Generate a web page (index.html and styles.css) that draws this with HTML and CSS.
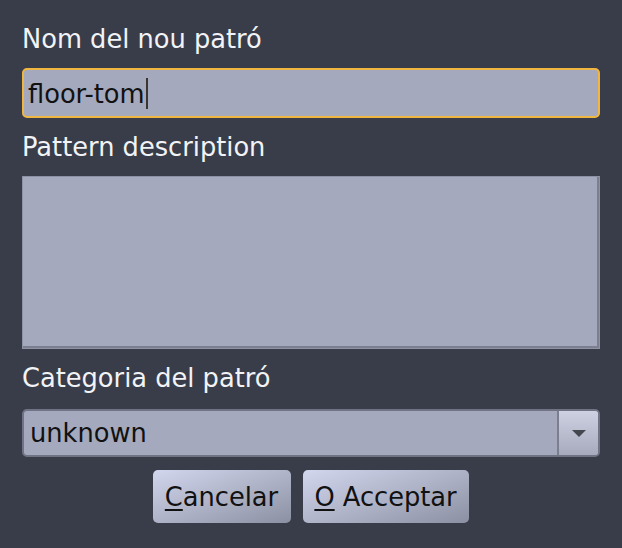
FILE: index.html
```html
<!DOCTYPE html>
<html>
<head>
<meta charset="utf-8">
<link rel="stylesheet" href="styles.css">
</head>
<body>
<div class="dialog">
  <div class="label">Nom del nou patró</div>
  <div class="entry"><span class="entry-text">floor-tom</span><span class="caret"></span></div>
  <div class="label">Pattern description</div>
  <div class="textarea"></div>
  <div class="label">Categoria del patró</div>
  <div class="combo">
    <span class="combo-text">unknown</span>
    <span class="combo-btn"><span class="arrow"></span></span>
  </div>
  <div class="buttons">
    <div class="btn btn-cancel"><span><span class="mn">C</span>ancelar</span></div>
    <div class="btn btn-ok"><span><span class="mn">O</span> Acceptar</span></div>
  </div>
</div>
</body>
</html>
```

FILE: styles.css
```css
html, body {
  margin: 0;
  padding: 0;
  background: #393d49;
}
body {
  width: 622px;
  height: 548px;
  overflow: hidden;
  font-family: "DejaVu Sans", sans-serif;
  font-size: 25.7px;
  line-height: 30px;
}
.dialog {
  display: flex;
  flex-direction: column;
  padding: 24px 22px 0 22px;
}
.label {
  color: #f2f3f6;
  padding-left: 0;
}
.entry {
  margin: 14px 0;
  height: 50px;
  box-sizing: border-box;
  border: 2px solid #f0b642;
  border-radius: 5px;
  background: #a4a9bd;
  display: flex;
  align-items: center;
  padding-left: 4px;
  color: #111;
}
.entry-text {
  position: relative;
  top: 1px;
}
.caret {
  display: inline-block;
  width: 2px;
  height: 31px;
  background: #3a3530;
  margin-left: 1px;
}
.textarea {
  margin: 14px 0;
  height: 173px;
  box-sizing: border-box;
  background: #a4a9bd;
  border: 1px solid #8d92a5;
  box-shadow: inset -2px -2px 0 #7b7f90;
}
.combo {
  margin-top: 16px;
  height: 48px;
  box-sizing: border-box;
  border: 2px solid #6f7383;
  border-radius: 5px;
  background: #a4a9bd;
  display: flex;
  align-items: stretch;
  color: #111;
}
.combo-text {
  flex: 1;
  display: flex;
  align-items: center;
  padding-left: 6px;
}
.combo-btn {
  width: 39px;
  border-left: 2px solid #7a7e8e;
  border-radius: 0 3px 3px 0;
  background: linear-gradient(#cdd1e2, #a6aabc);
  display: flex;
  align-items: center;
  justify-content: center;
}
.arrow {
  width: 0;
  height: 0;
  border-left: 7px solid transparent;
  border-right: 7px solid transparent;
  border-top: 7px solid #45474f;
}
.buttons {
  margin-top: 13px;
  display: flex;
  justify-content: center;
  gap: 12px;
  padding-right: 1px;
}
.btn {
  height: 53px;
  box-sizing: border-box;
  border-radius: 5px;
  background: linear-gradient(160deg, #d2d6ee 0%, #b0b4c8 50%, #8c90a3 100%);
  color: #111;
  display: flex;
  align-items: center;
  justify-content: center;
}
.btn-cancel { width: 138px; }
.btn-ok { width: 166px; }
.mn {
  text-decoration: underline;
  text-decoration-thickness: 2px;
  text-underline-offset: 3px;
}
```
